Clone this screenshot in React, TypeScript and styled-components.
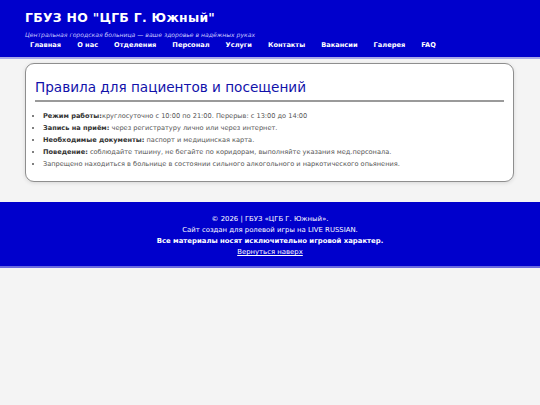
import React from "react";
import styled, { createGlobalStyle } from "styled-components";

const Global = createGlobalStyle`
  html, body {
    margin: 0;
    padding: 0;
    background: #f4f4f4;
    font-family: "DejaVu Sans", Verdana, sans-serif;
  }
`;

const Header = styled.header`
  background: #0000cc;
  color: #ffffff;
  padding: 10px 25px 6px;
  border-bottom: 2px solid #a9a9e8;
`;

const Title = styled.h1`
  margin: 0;
  font-size: 12.4px;
  line-height: 16px;
  font-weight: bold;
  letter-spacing: 0.3px;
`;

const Tagline = styled.p`
  margin: 5px 0 0;
  font-size: 6.1px;
  line-height: 8px;
  font-style: italic;
  color: #c8c8ff;
`;

const Nav = styled.nav`
  display: flex;
  gap: 6px;
`;

const NavLink = styled.a`
  color: #ffffff;
  font-weight: bold;
  font-size: 6.65px;
  line-height: 12px;
  padding: 0 5px;
  text-decoration: none;
`;

const Main = styled.main`
  padding: 4px 26px 20px 25px;
`;

const Card = styled.section`
  background: #ffffff;
  border: 1px solid #8e8e8e;
  border-radius: 9px;
  box-shadow: 0 1px 4px rgba(0, 0, 0, 0.12);
  padding: 13px 9px 11px 9px;
`;

const CardTitle = styled.h2`
  margin: 0;
  font-weight: normal;
  font-size: 13.6px;
  line-height: 20px;
  color: #1111aa;
  padding-bottom: 3px;
  border-bottom: 2px solid #9a9a9a;
`;

const Rules = styled.ul`
  margin: 8px 0 0;
  padding: 0 0 0 8px;
  list-style: disc;
  font-size: 6.6px;
  line-height: 11px;
  color: #555555;
`;

const Rule = styled.li`
  line-height: 11px;
  &::marker {
    font-size: 6px;
  }
`;

const Label = styled.b`
  color: #333333;
`;

const Footer = styled.footer`
  background: #0000cc;
  color: #ffffff;
  text-align: center;
  padding: 12px 10px 8px;
  border-bottom: 2px solid #6a6ae0;
  font-size: 6.9px;
  line-height: 11px;
`;

const FooterLine = styled.p<{ $bold?: boolean }>`
  margin: 0;
  font-weight: ${(p) => (p.$bold ? "bold" : "normal")};
`;

const TopLink = styled.a`
  color: #ffffff;
  text-decoration: underline;
`;

const links = [
  "Главная",
  "О нас",
  "Отделения",
  "Персонал",
  "Услуги",
  "Контакты",
  "Вакансии",
  "Галерея",
  "FAQ",
];

export default function App() {
  return (
    <>
      <Global />
      <Header>
        <Title>ГБУЗ НО "ЦГБ Г. Южный"</Title>
        <Tagline>Центральная городская больница — ваше здоровье в надёжных руках</Tagline>
        <Nav>
          {links.map((l) => (
            <NavLink key={l} href="#">
              {l}
            </NavLink>
          ))}
        </Nav>
      </Header>
      <Main>
        <Card>
          <CardTitle>Правила для пациентов и посещений</CardTitle>
          <Rules>
            <Rule>
              <Label>Режим работы:</Label>круглосуточно с 10:00 по 21:00. Перерыв: с 13:00 до 14:00
            </Rule>
            <Rule>
              <Label>Запись на приём:</Label> через регистратуру лично или через интернет.
            </Rule>
            <Rule>
              <Label>Необходимые документы:</Label> паспорт и медицинская карта.
            </Rule>
            <Rule>
              <Label>Поведение:</Label> соблюдайте тишину, не бегайте по коридорам, выполняйте указания мед.персонала.
            </Rule>
            <Rule>
              Запрещено находиться в больнице в состоянии сильного алкогольного и наркотического опьянения.
            </Rule>
          </Rules>
        </Card>
      </Main>
      <Footer>
        <FooterLine>© 2026 | ГБУЗ «ЦГБ Г. Южный».</FooterLine>
        <FooterLine>Сайт создан для ролевой игры на LIVE RUSSIAN.</FooterLine>
        <FooterLine $bold>Все материалы носят исключительно игровой характер.</FooterLine>
        <FooterLine>
          <TopLink href="#">Вернуться наверх</TopLink>
        </FooterLine>
      </Footer>
    </>
  );
}
